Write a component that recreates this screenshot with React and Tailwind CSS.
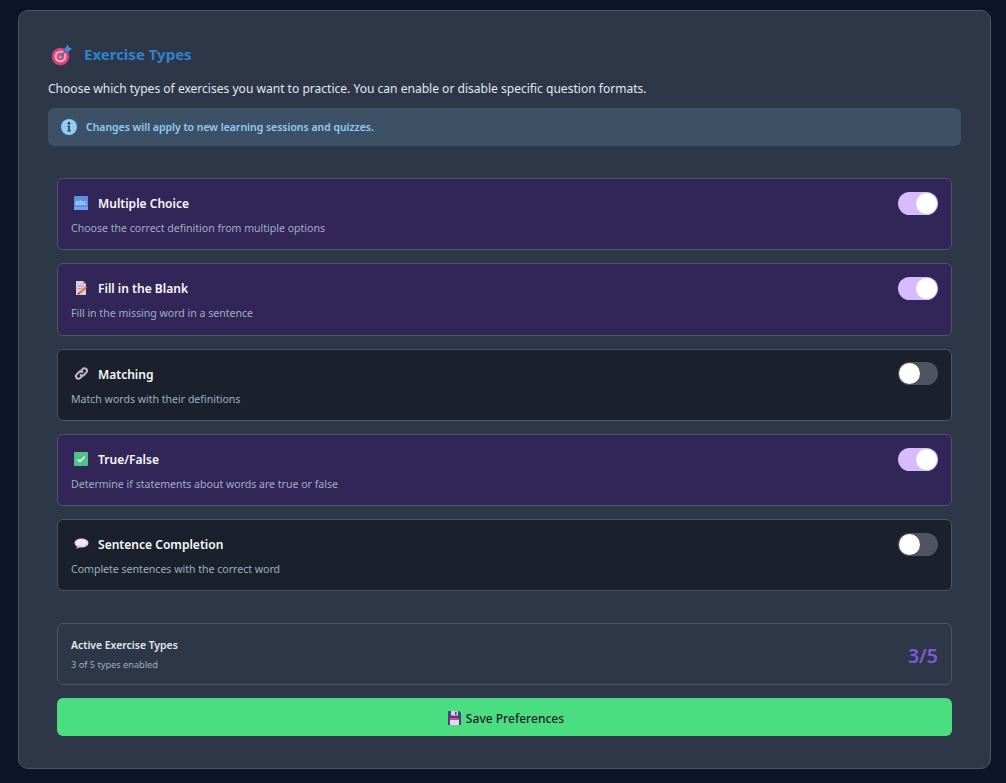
import React from "react";

function Target() {
  return (
    <svg viewBox="0 0 22 22" className="w-[22px] h-[22px] shrink-0">
      <circle cx="9.5" cy="12.5" r="8.7" fill="#d6437a" />
      <circle cx="9.5" cy="12.5" r="5.9" fill="#f0a9c2" />
      <circle cx="9.5" cy="12.5" r="3.7" fill="#d6437a" />
      <circle cx="9.5" cy="12.5" r="1.6" fill="#f0a9c2" />
      <path d="M9.5 12.5 L16 5.5" stroke="#3f6fa8" strokeWidth="1.6" />
      <path d="M13.5 5 L16.8 0.6 L18 3.4 L21 4.2 L17 8.2 Z" fill="#3b8ed8" />
    </svg>
  );
}

function Abc() {
  return (
    <svg viewBox="0 0 14 14" className="w-[14px] h-[14px] block">
      <rect width="14" height="14" rx="1" fill="#5a8fe6" />
      <rect y="11" width="14" height="3" fill="#72a2f2" />
      <text x="7" y="9.2" textAnchor="middle" fontSize="6.6" fontWeight="700" fontFamily="Liberation Sans" fill="#c6d8f8">abc</text>
    </svg>
  );
}

function Memo() {
  return (
    <svg viewBox="0 0 14 14" className="w-[14px] h-[14px] block">
      <path d="M2 0 H9 L12 3 V14 H2 Z" fill="#d8cfe0" />
      <path d="M9 0 L12 3 H9 Z" fill="#a99fb5" />
      <path d="M3.5 5 H10 M3.5 7.5 H8" stroke="#a99fb5" strokeWidth="1" />
      <path d="M5 12.5 L12.5 6" stroke="#e8703a" strokeWidth="2.2" />
      <path d="M3.6 13.6 L4.2 11.4 L6 12.9 Z" fill="#5b3a30" />
    </svg>
  );
}

function Link() {
  return (
    <svg viewBox="0 0 15 15" className="w-[15px] h-[15px] block" fill="none">
      <g stroke="#bfb4c9" strokeWidth="2.1" strokeLinecap="round" strokeLinejoin="round">
        <path d="M6.5 5.5 L8.6 3.1 A2.5 2.5 0 0 1 12.4 6.4 L10.2 8.8 A2.5 2.5 0 0 1 6.7 8.9" />
        <path d="M8.5 9.5 L6.4 11.9 A2.5 2.5 0 0 1 2.6 8.6 L4.8 6.2 A2.5 2.5 0 0 1 8.3 6.1" />
      </g>
    </svg>
  );
}

function Check() {
  return (
    <svg viewBox="0 0 14 14" className="w-[14px] h-[14px] block">
      <rect width="14" height="14" rx="1" fill="#4fc28a" />
      <path d="M3.5 7.3 L6 9.6 L10.7 4.6" stroke="#e6f3ee" strokeWidth="1.7" fill="none" />
    </svg>
  );
}

function Bubble() {
  return (
    <svg viewBox="0 0 15 12" className="w-[15px] h-[12px] block">
      <ellipse cx="7.5" cy="5" rx="7" ry="4.6" fill="#e3d7ee" />
      <ellipse cx="7.5" cy="4.4" rx="5" ry="3" fill="#f1e9f7" />
      <path d="M3 8 L2.4 11 L6 9 Z" fill="#cdbfdc" />
    </svg>
  );
}

function Disk() {
  return (
    <svg viewBox="0 0 13 14" className="w-[13px] h-[14px] block">
      <path d="M0 1 Q0 0 1 0 H11 L13 2 V14 H0 Z" fill="#4f3f86" />
      <rect x="3" y="0" width="7" height="4.6" fill="#d9d3e6" />
      <rect x="7" y="0.8" width="1.6" height="3" fill="#4f3f86" />
      <rect x="2" y="7" width="9" height="2" fill="#e0457b" />
      <rect x="2" y="9" width="9" height="5" fill="#e6d8ea" />
    </svg>
  );
}

const items = [
  { icon: <Abc />, title: "Multiple Choice", desc: "Choose the correct definition from multiple options", on: true },
  { icon: <Memo />, title: "Fill in the Blank", desc: "Fill in the missing word in a sentence", on: true },
  { icon: <Link />, title: "Matching", desc: "Match words with their definitions", on: false },
  { icon: <Check />, title: "True/False", desc: "Determine if statements about words are true or false", on: true },
  { icon: <Bubble />, title: "Sentence Completion", desc: "Complete sentences with the correct word", on: false },
];

function Toggle({ on }) {
  return (
    <div className={`w-[40px] h-[23px] mt-[-0.1px] rounded-full p-[1px] flex shrink-0 ${on ? "bg-[#d6bcfa] justify-end" : "bg-[#4f5560] justify-start"}`}>
      <div className="w-[21px] h-[21px] rounded-full bg-white" />
    </div>
  );
}

function Item({ icon, title, desc, on }) {
  return (
    <div className={`h-[72.25px] rounded-md border border-[#4a5568] pl-[13px] pr-[13px] pt-[13px] flex justify-between items-start ${on ? "bg-[#322659]" : "bg-[#1a202c]"}`}>
      <div>
        <div className="flex items-center h-[22px]">
          <span className="w-[27px] pl-[3px] flex items-center justify-start">{icon}</span>
          <span className="self-start pt-[1px] text-[12.05px] font-semibold text-[#f7fafc] leading-[22px]">{title}</span>
        </div>
        <p className="text-[10.55px] leading-[18px] mt-[5px] text-[#a0aec0]">{desc}</p>
      </div>
      <Toggle on={on} />
    </div>
  );
}

export default function App() {
  return (
    <div className="min-h-[783px] bg-[#0d1528] pt-[10px] px-[18px] pb-[14px] font-['Noto_Sans','Open_Sans',sans-serif]">
      <div className="h-[759px] w-[973px] rounded-[10px] border border-[#4a5568] bg-[#2d3748] pt-[32px] px-[29px]">
        <div className="flex items-center h-[24px] pl-[3px] gap-[11px]">
          <Target />
          <h2 className="text-[15px] font-bold leading-[22px] pb-[2px] text-[#3182ce]">Exercise Types</h2>
        </div>
        <p className="text-[12.05px] leading-[21px] text-[#e2e8f0] mt-[11px]">
          Choose which types of exercises you want to practice. You can enable or disable specific question formats.
        </p>
        <div className="mt-[9px] h-[38px] rounded-md bg-[#3d5166] flex items-center pl-[13px] w-[913px]">
          <svg viewBox="0 0 16 16" className="w-[16px] h-[16px] mr-[9px]">
            <circle cx="8" cy="8" r="8" fill="#90cdf4" />
            <circle cx="8" cy="4.4" r="1.3" fill="#2d3748" />
            <path d="M6.4 6.8 H8.9 V11.4 H10 V12.6 H6.2 V11.4 H7.3 V8 H6.4 Z" fill="#2d3748" />
          </svg>
          <span className="pt-[2px] text-[10.45px] font-semibold text-[#90cdf4]">Changes will apply to new learning sessions and quizzes.</span>
        </div>
        <div className="mt-[32px] ml-[9px] w-[895px] flex flex-col gap-[13px]">
          {items.map((it) => (
            <Item key={it.title} {...it} />
          ))}
        </div>
        <div className="mt-[32px] ml-[9px] w-[895px] h-[62px] rounded-md border border-[#4a5568] flex items-center justify-between px-[13px]">
          <div>
            <p className="text-[10.4px] font-semibold leading-[18px] text-[#e2e8f0]">Active Exercise Types</p>
            <p className="text-[9.2px] leading-[15px] mt-[3px] text-[#a0aec0]">3 of 5 types enabled</p>
          </div>
          <span className="pt-[2px] text-[19.5px] font-semibold text-[#805ad5]">3/5</span>
        </div>
        <button className="mt-[13px] ml-[9px] w-[895px] h-[38px] pl-[3px] pt-[2px] rounded-md bg-[#4ade80] text-[#1a202c] text-[12.05px] font-medium flex items-center justify-center gap-[5px]">
          <Disk />
          <span className="pt-[2px]">Save Preferences</span>
        </button>
      </div>
    </div>
  );
}
